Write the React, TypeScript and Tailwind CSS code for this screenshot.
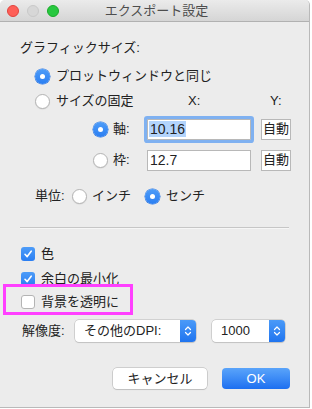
import React from "react";

const font = { fontFamily: '"Liberation Sans", "Noto Sans CJK JP", sans-serif' };

function Radio({ on }: { on?: boolean }) {
  return on ? (
    <span className="flex h-[15px] w-[15px] shrink-0 items-center justify-center rounded-full bg-gradient-to-b from-[#4d9cf8] to-[#2a7ef2] shadow-[0_0_0_0.5px_#2a74e0]">
      <span className="h-[5px] w-[5px] rounded-full bg-white" />
    </span>
  ) : (
    <span className="h-[15px] w-[15px] shrink-0 rounded-full border border-[#b4b4b4] bg-white shadow-[0_0.5px_1px_rgba(0,0,0,0.1)]" />
  );
}

function Check({ on }: { on?: boolean }) {
  return on ? (
    <span className="flex h-[14px] w-[14px] shrink-0 items-center justify-center rounded-[3px] bg-gradient-to-b from-[#4d9cf8] to-[#2a7ef2]">
      <svg width="10" height="10" viewBox="0 0 10 10">
        <path d="M2 5.3 L4.2 7.6 L8.2 2.2" fill="none" stroke="white" strokeWidth="1.6" strokeLinecap="round" strokeLinejoin="round" />
      </svg>
    </span>
  ) : (
    <span className="h-[14px] w-[14px] shrink-0 rounded-[3px] border border-[#b4b4b4] bg-white" />
  );
}

function Stepper() {
  return (
    <span className="flex h-full w-[16px] items-center justify-center rounded-r-[4px] bg-gradient-to-b from-[#4a9af8] to-[#1f74ef]">
      <svg width="8" height="12" viewBox="0 0 8 12">
        <path d="M1.5 4.5 L4 2 L6.5 4.5 M1.5 7.5 L4 10 L6.5 7.5" fill="none" stroke="white" strokeWidth="1.2" strokeLinecap="round" strokeLinejoin="round" />
      </svg>
    </span>
  );
}

export default function App() {
  return (
    <div className="relative h-[409px] w-[312px] bg-white text-[13px] text-[#222]" style={font}>
      <div className="flex h-[408px] w-[310px] flex-col overflow-hidden rounded-t-[5px] border-r border-b border-[#b9b9b9] bg-[#ececec]">
        {/* title bar */}
        <div className="relative flex h-[22px] shrink-0 items-center border-b border-[#b1b1b1] bg-gradient-to-b from-[#ebebeb] to-[#d5d5d5]">
          <div className="flex items-center gap-[8px] pl-[7px]">
            <span className="h-[12px] w-[12px] rounded-full border border-[#e0443e] bg-[#fe5f57]" />
            <span className="h-[12px] w-[12px] rounded-full border border-[#c8c8c8] bg-[#d7d7d7]" />
            <span className="h-[12px] w-[12px] rounded-full border border-[#1aab29] bg-[#28c840]" />
          </div>
          <div className="absolute inset-0 flex items-center justify-center pl-[4px] text-[13px] text-[#4d4d4d]">エクスポート設定</div>
        </div>

        {/* graphic size */}
        <div className="mt-[16px] flex h-[20px] items-center pl-[20px]">グラフィックサイズ:</div>
        <div className="mt-[8px] flex h-[20px] items-center gap-[6px] pl-[35px]">
          <Radio on />
          <span>プロットウィンドウと同じ</span>
        </div>
        <div className="mt-[5px] flex h-[20px] items-center pl-[35px]">
          <Radio />
          <span className="ml-[6px] w-[132px]">サイズの固定</span>
          <span className="w-[82px]">X:</span>
          <span>Y:</span>
        </div>
        <div className="mt-[7px] flex h-[22px] items-center pl-[93px]">
          <Radio on />
          <span className="ml-[5px] w-[34px]">軸:</span>
          <div className="flex h-[21px] w-[104px] items-center border border-[#b8b8b8] bg-white pl-[1px] shadow-[0_0_0_3px_#7fb1f1] rounded-[1px]">
            <span className="bg-[#b3d4fc] px-[1px] text-[14px] leading-[16px]">10.16</span>
          </div>
          <div className="ml-[10px] flex h-[21px] w-[30px] items-center justify-center border border-[#b8b8b8] bg-white text-[13px]">自動</div>
        </div>
        <div className="mt-[9px] flex h-[22px] items-center pl-[93px]">
          <Radio />
          <span className="ml-[5px] w-[34px]">枠:</span>
          <div className="flex h-[21px] w-[104px] items-center border border-[#b8b8b8] bg-white pl-[2px] text-[14px]">12.7</div>
          <div className="ml-[10px] flex h-[21px] w-[30px] items-center justify-center border border-[#b8b8b8] bg-white text-[13px]">自動</div>
        </div>

        {/* unit */}
        <div className="mt-[15px] flex h-[20px] items-center pl-[35px]">
          <span className="w-[37px]">単位:</span>
          <Radio />
          <span className="ml-[5px] w-[53px]">インチ</span>
          <Radio on />
          <span className="ml-[6px]">センチ</span>
        </div>

        <div className="mx-[20px] mt-[21px] h-[2px] border-t border-[#c6c6c6] border-b border-b-[#f6f6f6]" />

        {/* checkboxes */}
        <div className="mt-[15px] flex h-[20px] items-center gap-[6px] pl-[21px]">
          <Check on />
          <span>色</span>
        </div>
        <div className="mt-[5px] flex h-[20px] items-center gap-[6px] pl-[21px]">
          <Check on />
          <span>余白の最小化</span>
        </div>
        <div className="mt-[3px] flex h-[20px] items-center gap-[6px] pl-[21px]">
          <Check />
          <span>背景を透明に</span>
        </div>

        {/* resolution */}
        <div className="mt-[7px] flex h-[23px] items-center pl-[22px]">
          <span className="w-[53px]">解像度:</span>
          <div className="flex h-[22px] w-[121px] items-center rounded-[4px] bg-white shadow-[0_0_0_0.5px_#b5b5b5,0_1px_1px_rgba(0,0,0,0.12)]">
            <span className="flex-1 pl-[9px]">その他のDPI:</span>
            <Stepper />
          </div>
          <div className="ml-[16px] flex h-[22px] w-[73px] items-center rounded-[4px] bg-white shadow-[0_0_0_0.5px_#b5b5b5,0_1px_1px_rgba(0,0,0,0.12)]">
            <span className="flex-1 pl-[9px]">1000</span>
            <Stepper />
          </div>
        </div>

        {/* buttons */}
        <div className="mt-[26px] flex h-[21px] items-center pl-[113px]">
          <div className="flex h-[21px] w-[94px] items-center justify-center rounded-[4px] bg-white shadow-[0_0_0_0.5px_#b0b0b0,0_1px_1px_rgba(0,0,0,0.12)]">キャンセル</div>
          <div className="ml-[15px] flex h-[21px] w-[68px] items-center justify-center rounded-[4px] bg-gradient-to-b from-[#5aa4fa] to-[#1c6ff0] text-white">OK</div>
        </div>
      </div>

      {/* highlight */}
      <div className="absolute left-[3px] top-[284px] h-[31px] w-[130px] border-[3px] border-[#ff40ff]" />
    </div>
  );
}
